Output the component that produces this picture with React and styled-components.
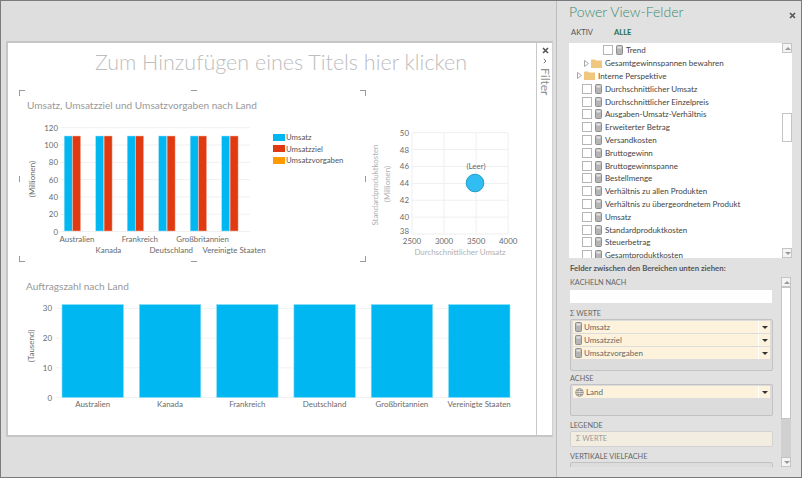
import React from 'react';
import styled, { createGlobalStyle } from 'styled-components';

const GlobalStyle = createGlobalStyle`
  html, body { margin: 0; padding: 0; background: #dedede; }
  * { box-sizing: border-box; }
`;

const countries = ['Australien', 'Kanada', 'Frankreich', 'Deutschland', 'Großbritannien', 'Vereinigte Staaten'];
const fieldNames = [
  'Durchschnittlicher Umsatz', 'Durchschnittlicher Einzelpreis', 'Ausgaben-Umsatz-Verhältnis', 'Erweiterter Betrag',
  'Versandkosten', 'Bruttogewinn', 'Bruttogewinnspanne', 'Bestellmenge', 'Verhältnis zu allen Produkten',
  'Verhältnis zu übergeordnetem Produkt', 'Umsatz', 'Standardproduktkosten', 'Steuerbetrag', 'Gesamtproduktkosten',
];
const legend = [['Umsatz', '#00b7f1'], ['Umsatzziel', '#e03a12'], ['Umsatzvorgaben', '#ff9a00']];

const CalcIcon = () => (
  <svg width="7" height="10" viewBox="0 0 7 10">
    <rect x="0.5" y="0.5" width="6" height="9" rx="1" fill="#b5b5b5" stroke="#8e8e8e" />
    <rect x="1.5" y="1.5" width="4" height="2" fill="#e4e4e4" />
  </svg>
);

const FolderIcon = () => (
  <svg width="11" height="9" viewBox="0 0 11 9">
    <path d="M0 1.2 L0.6 0.4 H4 L4.8 1.4 H11 V9 H0 Z" fill="#efc77f" />
  </svg>
);

const Expander = () => (
  <svg width="5" height="7" viewBox="0 0 5 7">
    <path d="M0.5 0.5 L4.5 3.5 L0.5 6.5 Z" fill="#fff" stroke="#a6a6a6" />
  </svg>
);

const GlobeIcon = () => (
  <svg width="9" height="9" viewBox="0 0 9 9" fill="none" stroke="#8f8f8f" strokeWidth="0.8">
    <circle cx="4.5" cy="4.5" r="3.9" />
    <ellipse cx="4.5" cy="4.5" rx="1.7" ry="3.9" />
    <path d="M0.6 4.5 H8.4 M1.2 2.5 H7.8 M1.2 6.5 H7.8" />
  </svg>
);

const CloseIcon = () => (
  <svg width="7" height="7" viewBox="0 0 7 7">
    <path d="M1 1 L6 6 M6 1 L1 6" stroke="#555" strokeWidth="1.6" />
  </svg>
);

const ChevronIcon = () => (
  <svg width="4" height="6" viewBox="0 0 4 6" fill="none">
    <path d="M0.8 0.8 L3 3 L0.8 5.2" stroke="#777" />
  </svg>
);

const BarChart = () => {
  const y = (v) => 233.5 - v * 0.865;
  return (
    <svg width="250" height="140" viewBox="22 122 250 140">
      {[0, 20, 40, 60, 80, 100, 120].map((v) => (
        <g key={v}>
          <line x1="60" x2="250" y1={y(v)} y2={y(v)} stroke="#f0f0f0" />
          <AxisText x="58" y={y(v) + 3} textAnchor="end">{v}</AxisText>
        </g>
      ))}
      <AxisText transform="translate(35 181) rotate(-90)" textAnchor="middle">(Millionen)</AxisText>
      {countries.map((c, i) => {
        const x = 64.2 + i * 31.5;
        return (
          <g key={c}>
            <rect x={x} y="138" width="8" height="95" fill="#00b7f1" stroke="#9fe2f9" strokeWidth="0.5" />
            <rect x={x + 8.4} y="138" width="8" height="95" fill="#e03a12" stroke="#f5b9a9" strokeWidth="0.5" />
            <AxisText x={77 + i * 31.4} y={i % 2 ? 255 : 244} textAnchor="middle">{c}</AxisText>
          </g>
        );
      })}
    </svg>
  );
};

const ScatterChart = () => {
  const x = (v) => 412 + (v - 2500) * 0.0641;
  const y = (v) => 234 - (v - 38) * 8.44;
  return (
    <svg width="166" height="140" viewBox="368 122 166 140">
      {[38, 40, 42, 44, 46, 48, 50].map((v) => (
        <g key={v}>
          <line x1="412" x2="508" y1={y(v)} y2={y(v)} stroke="#efefef" />
          <AxisText x="409" y={v === 38 ? y(v) : y(v) + 3} textAnchor="end">{v}</AxisText>
        </g>
      ))}
      {[2500, 3000, 3500, 4000].map((v) => (
        <g key={v}>
          <line x1={x(v)} x2={x(v)} y1="133" y2="234" stroke="#efefef" />
          <AxisText x={x(v)} y="244" textAnchor="middle">{v}</AxisText>
        </g>
      ))}
      <TitleText transform="translate(378 185) rotate(-90)" textAnchor="middle">Standardproduktkosten</TitleText>
      <TitleText transform="translate(390 184) rotate(-90)" textAnchor="middle">(Millionen)</TitleText>
      <TitleText x="460" y="255" textAnchor="middle">Durchschnittlicher Umsatz</TitleText>
      <AxisText x="476" y="169" textAnchor="middle">(Leer)</AxisText>
      <circle cx="475" cy="183" r="8.8" fill="#30bdf1" stroke="#1f9ecb" />
    </svg>
  );
};

const OrderChart = () => {
  const y = (v) => 397.5 - v * 2.97;
  return (
    <svg width="510" height="122" viewBox="20 296 510 122">
      {[0, 10, 20, 30].map((v) => (
        <g key={v}>
          <line x1="55" x2="512" y1={y(v)} y2={y(v)} stroke="#f2f2f2" />
          <AxisText x="52" y={y(v) + 3} textAnchor="end">{v}</AxisText>
        </g>
      ))}
      <AxisText transform="translate(34 346) rotate(-90)" textAnchor="middle">(Tausend)</AxisText>
      {countries.map((c, i) => {
        const x = 62 + i * 77.3;
        return (
          <g key={c}>
            <rect x={x} y="304.5" width="61.5" height="93" fill="#00b7f1" stroke="#8fdff9" strokeWidth="0.6" />
            <AxisText x={x + 30.7} y="407" textAnchor="middle">{c}</AxisText>
          </g>
        );
      })}
    </svg>
  );
};

const FieldPill = ({ icon, label }) => (
  <Pill>
    <PillLabel>{icon}{label}</PillLabel>
    <PillArrow />
  </Pill>
);

export default function App() {
  return (
    <>
      <GlobalStyle />
      <Window>
        <Stage>
          <Canvas>
            <Sheet>
              <PageTitle>Zum Hinzufügen eines Titels hier klicken</PageTitle>
              <ChartRow>
                <Frame>
                  <Corner $pos="tl" /><Corner $pos="tr" /><Corner $pos="bl" /><Corner $pos="br" />
                  <Tick $pos="top" /><Tick $pos="bottom" /><Tick $pos="left" /><Tick $pos="right" />
                  <ChartTitle>Umsatz, Umsatzziel und Umsatzvorgaben nach Land</ChartTitle>
                  <FrameBody>
                    <BarChart />
                    <Legend>
                      {legend.map(([name, color]) => (
                        <LegendItem key={name}><Swatch $color={color} />{name}</LegendItem>
                      ))}
                    </Legend>
                  </FrameBody>
                </Frame>
                <ScatterSlot><ScatterChart /></ScatterSlot>
              </ChartRow>
              <LowerChart>
                <ChartTitle>Auftragszahl nach Land</ChartTitle>
                <OrderChart />
              </LowerChart>
            </Sheet>
            <FilterStrip>
              <FilterIcons><CloseIcon /><ChevronIcon /></FilterIcons>
              <FilterLabel>Filter</FilterLabel>
            </FilterStrip>
          </Canvas>
        </Stage>
        <Pane>
          <PaneHeader>
            <PaneTitle>Power View-Felder</PaneTitle>
            <PaneClose><CloseIcon /></PaneClose>
          </PaneHeader>
          <Tabs>
            <Tab>AKTIV</Tab>
            <Tab $active>ALLE</Tab>
          </Tabs>
          <FieldList>
            <Rows>
              <Row $indent={34}><Check /><CalcIcon /><RowText>Trend</RowText></Row>
              <Row $indent={15}><Expander /><FolderIcon /><RowText>Gesamtgewinnspannen bewahren</RowText></Row>
              <Row $indent={8}><Expander /><FolderIcon /><RowText>Interne Perspektive</RowText></Row>
              {fieldNames.map((name) => (
                <Row key={name} $indent={13}><Check /><CalcIcon /><RowText>{name}</RowText></Row>
              ))}
            </Rows>
            <ScrollBar>
              <ScrollButton $up />
              <ScrollTrack $thumbTop={60} $thumbHeight={27} />
              <ScrollButton />
            </ScrollBar>
          </FieldList>
          <DragHint>Felder zwischen den Bereichen unten ziehen:</DragHint>
          <Areas>
            <AreaColumn>
              <AreaLabel>KACHELN NACH</AreaLabel>
              <TileInput />
              <AreaLabel $gap={5}>Σ WERTE</AreaLabel>
              <DropBox $height={52}>
                <FieldPill icon={<CalcIcon />} label="Umsatz" />
                <FieldPill icon={<CalcIcon />} label="Umsatzziel" />
                <FieldPill icon={<CalcIcon />} label="Umsatzvorgaben" />
              </DropBox>
              <AreaLabel $gap={2}>ACHSE</AreaLabel>
              <DropBox $height={32}>
                <FieldPill icon={<GlobeIcon />} label="Land" />
              </DropBox>
              <AreaLabel $gap={4}>LEGENDE</AreaLabel>
              <DisabledBox>Σ WERTE</DisabledBox>
              <AreaLabel $gap={4}>VERTIKALE VIELFACHE</AreaLabel>
              <DropBox $height={32} />
            </AreaColumn>
            <ScrollBar>
              <ScrollButton $up />
              <ScrollTrack $thumbTop={0} $thumbHeight={130} $fill="#d0d0d0" />
              <ScrollButton />
            </ScrollBar>
          </Areas>
        </Pane>
      </Window>
    </>
  );
}

const Window = styled.div`
  width: 802px;
  height: 478px;
  display: flex;
  overflow: hidden;
  background: #dedede;
  border: 1px solid #7b7b7b;
  font-family: Lato, "Open Sans", "Liberation Sans", sans-serif;
`;

const Stage = styled.div`
  width: 556px;
  flex: none;
  padding: 40px 3px 0 5px;
  border-right: 1px solid #bdbdbd;
`;

const Canvas = styled.div`
  height: 396px;
  display: flex;
  background: #fff;
  border-top: 2px solid #c6c6c6;
  border-left: 2px solid #c6c6c6;
  border-right: 1px solid #d0d0d0;
  border-bottom: 2px solid #c6c6c6;
`;

const Sheet = styled.div`
  width: 528px;
  flex: none;
`;

const PageTitle = styled.div`
  height: 39px;
  padding: 3px 0 0 18px;
  text-align: center;
  font-size: 21.5px;
  font-weight: 300;
  line-height: 33px;
  color: #bdbdbd;
  white-space: nowrap;
`;

const ChartRow = styled.div`
  display: flex;
  margin: 8px 0 0 11px;
`;

const Frame = styled.div`
  position: relative;
  width: 347px;
  height: 172px;
  flex: none;
  padding: 8px 0 0 8px;
`;

const cornerPlace = {
  tl: 'top: 0; left: 0; border-top-width: 1px; border-left-width: 1px;',
  tr: 'top: 0; right: 0; border-top-width: 1px; border-right-width: 1px;',
  bl: 'bottom: 0; left: 0; border-bottom-width: 1px; border-left-width: 1px;',
  br: 'bottom: 0; right: 0; border-bottom-width: 1px; border-right-width: 1px;',
};

const Corner = styled.span`
  position: absolute;
  width: 6px;
  height: 6px;
  border: 0 solid #9a9a9a;
  ${(p) => cornerPlace[p.$pos]}
`;

const tickPlace = {
  top: 'top: 0; left: 172px; width: 6px; height: 1px;',
  bottom: 'bottom: 0; left: 172px; width: 6px; height: 1px;',
  left: 'top: 86px; left: 0; width: 1px; height: 6px;',
  right: 'top: 86px; right: 0; width: 1px; height: 6px;',
};

const Tick = styled.span`
  position: absolute;
  background: #9a9a9a;
  ${(p) => tickPlace[p.$pos]}
`;

const ChartTitle = styled.div`
  font-size: 10.1px;
  line-height: 14px;
  color: #999;
  white-space: nowrap;
`;

const FrameBody = styled.div`
  display: flex;
  margin: 8px 0 0 -5px;
`;

const Legend = styled.div`
  display: flex;
  flex-direction: column;
  gap: 3px;
  margin: 13px 0 0 1px;
`;

const LegendItem = styled.div`
  display: flex;
  align-items: center;
  height: 8.5px;
  font-size: 7.8px;
  color: #555;
  white-space: nowrap;
`;

const Swatch = styled.span`
  width: 12px;
  height: 7px;
  margin-right: 1px;
  background: ${(p) => p.$color};
`;

const ScatterSlot = styled.div`
  margin: 32px 0 0 2px;
`;

const LowerChart = styled.div`
  margin: 14px 0 0 18px;

  svg { display: block; margin: 3px 0 0 -6px; }
`;

const AxisText = styled.text`
  font-size: 7.9px;
  fill: #6a6a6a;
`;

const TitleText = styled.text`
  font-size: 7.9px;
  fill: #b0b0b0;
`;

const FilterStrip = styled.div`
  flex: 1;
  display: flex;
  flex-direction: column;
  align-items: center;
  border-left: 1px solid #c9c9c9;
  color: #777;
`;

const FilterIcons = styled.div`
  display: flex;
  flex-direction: column;
  align-items: center;
  gap: 4px;
  margin: 4px 0 0 1px;
`;

const FilterLabel = styled.div`
  writing-mode: vertical-rl;
  font-size: 12px;
  line-height: 14px;
  margin-top: 4px;
  color: #8f8f8f;
`;

const Pane = styled.div`
  flex: 1;
  min-width: 0;
  background: #e1e1e1;
  padding: 0 9px 0 12px;
`;

const PaneHeader = styled.div`
  height: 21px;
  display: flex;
  justify-content: space-between;
  align-items: flex-end;
`;

const PaneTitle = styled.div`
  font-size: 14px;
  font-weight: 300;
  line-height: 21px;
  color: #3a8a6d;
  white-space: nowrap;
`;

const PaneClose = styled.div`
  display: flex;
  margin: 0 -4px 3px 0;
`;

const Tabs = styled.div`
  height: 21px;
  display: flex;
  gap: 21px;
  padding: 3px 0 0 2px;
`;

const Tab = styled.div`
  font-size: 7.6px;
  line-height: 14px;
  font-weight: ${(p) => (p.$active ? 700 : 400)};
  color: ${(p) => (p.$active ? '#1f6f4c' : '#555')};
`;

const FieldList = styled.div`
  height: 215px;
  display: flex;
  overflow: hidden;
  background: #fff;
`;

const Rows = styled.div`
  flex: 1;
  min-width: 0;
  overflow: hidden;
  padding-top: 1px;
`;

const Row = styled.div`
  height: 12.8px;
  display: flex;
  align-items: center;
  gap: 2px;
  padding-left: ${(p) => p.$indent}px;
`;

const Check = styled.span`
  width: 10px;
  height: 10px;
  flex: none;
  margin-right: 1px;
  background: #fff;
  border: 1px solid #b5b5b5;
`;

const RowText = styled.span`
  margin-left: 1px;
  font-size: 8px;
  color: #444;
  white-space: nowrap;
`;

const ScrollBar = styled.div`
  width: 10px;
  flex: none;
  display: flex;
  flex-direction: column;
  background: #fff;
`;

const ScrollButton = styled.div`
  position: relative;
  height: 10px;
  flex: none;
  background: #f4f4f4;
  border: 1px solid #c4c4c4;

  &::after {
    content: '';
    position: absolute;
    left: 1.5px;
    top: 2.5px;
    border: 3px solid transparent;
    ${(p) => (p.$up ? 'border-top-width: 0; border-bottom-color: #9a9a9a;' : 'border-bottom-width: 0; border-top-color: #9a9a9a;')}
  }
`;

const ScrollTrack = styled.div`
  flex: 1;
  background: ${(p) => p.$fill || '#fff'};

  &::before {
    content: '';
    display: block;
    height: ${(p) => p.$thumbHeight}px;
    margin-top: ${(p) => p.$thumbTop}px;
    background: #fff;
    border: 1px solid #c4c4c4;
  }
`;

const DragHint = styled.div`
  height: 19px;
  padding: 5px 0 0 1px;
  font-size: 7.8px;
  font-weight: 700;
  line-height: 11px;
  color: #555;
  white-space: nowrap;
`;

const Areas = styled.div`
  height: 190px;
  display: flex;
  gap: 8px;
`;

const AreaColumn = styled.div`
  width: 204px;
  flex: none;
  overflow: hidden;
  padding-left: 1px;
`;

const AreaLabel = styled.div`
  margin-top: ${(p) => p.$gap || 0}px;
  height: 11px;
  font-size: 7.3px;
  line-height: 11px;
  color: #666;
  white-space: nowrap;
`;

const TileInput = styled.div`
  height: 13px;
  margin: 2px 1px 0 0;
  background: #fff;
`;

const DropBox = styled.div`
  height: ${(p) => p.$height}px;
  display: flex;
  flex-direction: column;
  gap: 1px;
  padding: 1px 2px;
  background: #dcdcdc;
  border: 1px solid #c2c2c2;
  border-radius: 2px;
`;

const Pill = styled.div`
  height: 12px;
  flex: none;
  display: flex;
  justify-content: space-between;
  background: #fdf3dc;
`;

const PillLabel = styled.span`
  display: flex;
  align-items: center;
  gap: 2px;
  padding-left: 2px;
  font-size: 8px;
  color: #666;
`;

const PillArrow = styled.span`
  position: relative;
  width: 12px;
  border-left: 1px solid #fff;

  &::after {
    content: '';
    position: absolute;
    left: 2.5px;
    top: 4.5px;
    border: 3px solid transparent;
    border-bottom-width: 0;
    border-top-color: #333;
  }
`;

const DisabledBox = styled.div`
  height: 16px;
  padding-left: 5px;
  font-size: 7.3px;
  line-height: 14px;
  color: #9a9a9a;
  background: #f2ede0;
  border: 1px solid #d2d2d2;
  border-radius: 2px;
`;
